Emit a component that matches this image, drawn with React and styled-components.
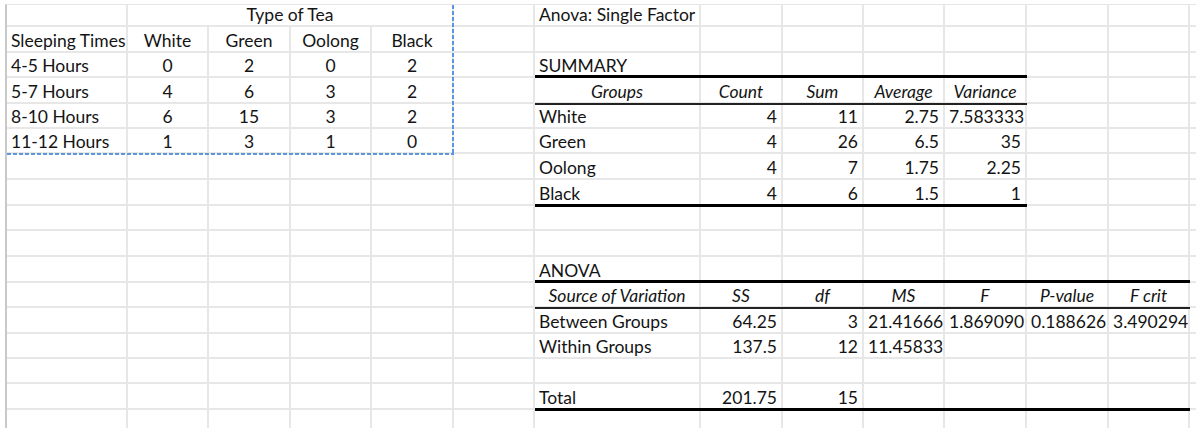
import React from 'react';
import styled, { createGlobalStyle } from 'styled-components';

const GlobalStyle = createGlobalStyle`
	html, body {
		margin: 0;
		padding: 0;
		background: #fff;
	}
	body {
		font-family: Lato, 'Liberation Sans', sans-serif;
		color: #141414;
	}
`;

const COLS = [121, 81, 82, 81, 82, 81, 166, 82, 81, 81, 82, 82, 81, 6];
const ROWS = [22, 26, 25, 26, 25, 25, 26, 26, 25, 26, 26, 25, 26, 25, 25, 26, 18];

const Page = styled.div`
	padding: 4px 0 0 5px;
`;

const Sheet = styled.div`
	display: grid;
	grid-template-columns: ${COLS.map((w) => `${w}px`).join(' ')};
	grid-template-rows: ${ROWS.map((h) => `${h}px`).join(' ')};
	width: max-content;
	border-left: 2px solid #c9c9c9;
	border-top: 1px solid #e6e6e6;
`;

const edge = (kind) =>
	kind === 'thick' ? 'height: 3px; background: #000;' : 'height: 2px; background: #222;';

const Cell = styled.div`
	position: relative;
	grid-row: ${(p) => p.$row};
	grid-column: ${(p) => p.$col} / span ${(p) => p.$span || 1};
	display: flex;
	align-items: flex-end;
	border-right: ${(p) => (p.$last ? 'none' : '2px solid #e7e7e7')};
	border-bottom: ${(p) => (p.$lastRow ? 'none' : '2px solid #e7e7e7')};
	font-size: 17.5px;
	line-height: 21px;
	font-style: ${(p) => (p.$italic ? 'italic' : 'normal')};

	${(p) =>
		p.$top &&
		`&::before {
			content: '';
			position: absolute;
			left: 0;
			right: -2px;
			top: -3px;
			z-index: 1;
			${edge(p.$top)}
		}`}

	${(p) =>
		p.$bottom &&
		`&::after {
			content: '';
			position: absolute;
			left: 0;
			right: -2px;
			bottom: -3px;
			z-index: 1;
			${edge(p.$bottom)}
		}`}
`;

const Value = styled.span`
	display: block;
	width: 100%;
	padding: 0 4px;
	box-sizing: border-box;
	overflow: hidden;
	white-space: nowrap;
	text-align: ${(p) => p.$align || 'left'};
`;

const Marquee = styled.div`
	grid-column: 1 / 6;
	grid-row: 1 / 7;
	position: relative;
	z-index: 2;
	pointer-events: none;
	margin-bottom: -1px;
	background:
		linear-gradient(to bottom, #5b94e0 4px, transparent 4px) right top / 2px 6px repeat-y,
		linear-gradient(to right, #5b94e0 4px, transparent 4px) left bottom / 6px 2px repeat-x;
`;

const ctr = (text) => ({ text, align: 'center' });
const num = (text) => ({ text, align: 'right' });
const clip = (text) => ({ text, align: 'left' });
const head = (text) => ({ text, align: 'center', italic: true });

const CONTENT = {
	0: { 1: { text: 'Type of Tea', align: 'center', span: 4 }, 6: { text: 'Anova: Single Factor' } },
	1: { 0: { text: 'Sleeping Times' }, 1: ctr('White'), 2: ctr('Green'), 3: ctr('Oolong'), 4: ctr('Black') },
	2: { 0: { text: '4-5 Hours' }, 1: ctr('0'), 2: ctr('2'), 3: ctr('0'), 4: ctr('2'), 6: { text: 'SUMMARY' } },
	3: {
		0: { text: '5-7 Hours' },
		1: ctr('4'),
		2: ctr('6'),
		3: ctr('3'),
		4: ctr('2'),
		6: head('Groups'),
		7: head('Count'),
		8: head('Sum'),
		9: head('Average'),
		10: head('Variance'),
	},
	4: {
		0: { text: '8-10 Hours' },
		1: ctr('6'),
		2: ctr('15'),
		3: ctr('3'),
		4: ctr('2'),
		6: { text: 'White' },
		7: num('4'),
		8: num('11'),
		9: num('2.75'),
		10: clip('7.58333333'),
	},
	5: {
		0: { text: '11-12 Hours' },
		1: ctr('1'),
		2: ctr('3'),
		3: ctr('1'),
		4: ctr('0'),
		6: { text: 'Green' },
		7: num('4'),
		8: num('26'),
		9: num('6.5'),
		10: num('35'),
	},
	6: { 6: { text: 'Oolong' }, 7: num('4'), 8: num('7'), 9: num('1.75'), 10: num('2.25') },
	7: { 6: { text: 'Black' }, 7: num('4'), 8: num('6'), 9: num('1.5'), 10: num('1') },
	10: { 6: { text: 'ANOVA' } },
	11: {
		6: head('Source of Variation'),
		7: head('SS'),
		8: head('df'),
		9: head('MS'),
		10: head('F'),
		11: head('P-value'),
		12: head('F crit'),
	},
	12: {
		6: { text: 'Between Groups' },
		7: num('64.25'),
		8: num('3'),
		9: clip('21.4166667'),
		10: clip('1.86909091'),
		11: clip('0.18862652'),
		12: clip('3.49029482'),
	},
	13: { 6: { text: 'Within Groups' }, 7: num('137.5'), 8: num('12'), 9: clip('11.4583333') },
	15: { 6: { text: 'Total' }, 7: num('201.75'), 8: num('15') },
};

// table rules: [row, firstCol, lastCol, side, kind]
const RULES = [
	[3, 6, 10, 'top', 'thick'],
	[3, 6, 10, 'bottom', 'thin'],
	[7, 6, 10, 'bottom', 'thick'],
	[11, 6, 12, 'top', 'thick'],
	[11, 6, 12, 'bottom', 'thin'],
	[15, 6, 12, 'bottom', 'thick'],
];

const ruleFor = (r, c, side) => {
	const hit = RULES.find(([row, a, b, s]) => row === r && s === side && c >= a && c <= b);
	return hit ? hit[4] : undefined;
};

const App = () => {
	const cells = [];
	ROWS.forEach((_, r) => {
		let c = 0;
		while (c < COLS.length) {
			const spec = (CONTENT[r] && CONTENT[r][c]) || {};
			const span = spec.span || 1;
			cells.push(
				<Cell
					key={`${r}-${c}`}
					$row={r + 1}
					$col={c + 1}
					$span={span}
					$italic={spec.italic}
					$last={c + span === COLS.length}
					$lastRow={r === ROWS.length - 1}
					$top={ruleFor(r, c, 'top')}
					$bottom={ruleFor(r, c, 'bottom')}
				>
					{spec.text && <Value $align={spec.align}>{spec.text}</Value>}
				</Cell>
			);
			c += span;
		}
	});

	return (
		<Page>
			<GlobalStyle />
			<Sheet>
				{cells}
				<Marquee />
			</Sheet>
		</Page>
	);
};

export default App;
